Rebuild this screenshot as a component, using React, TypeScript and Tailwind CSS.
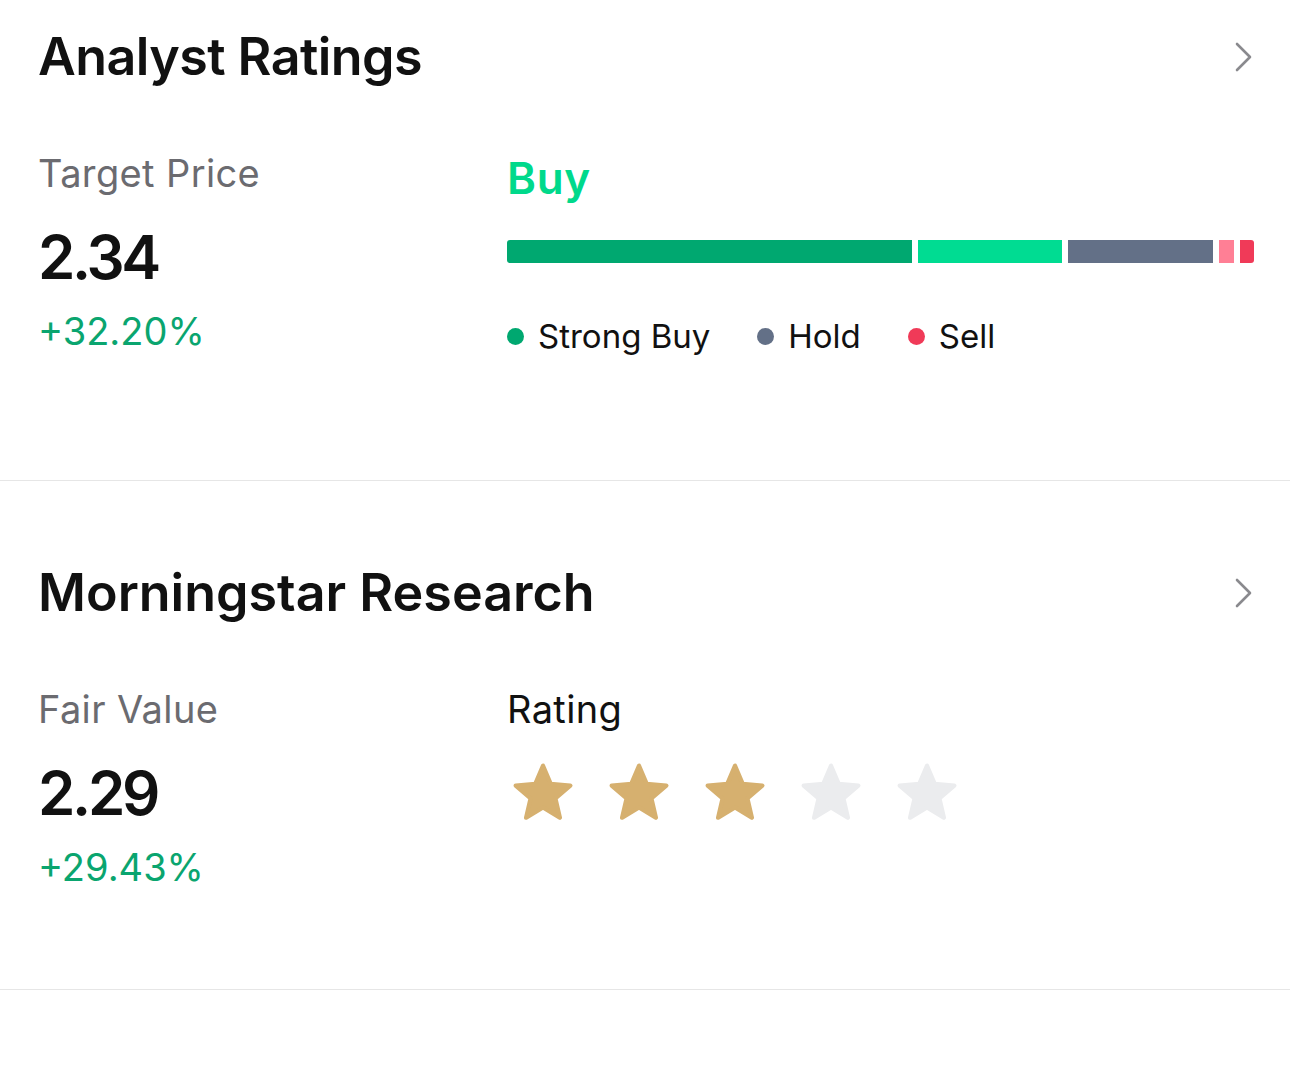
const font = { fontFamily: 'Inter, "Noto Sans", sans-serif' };

const BAR = [
  { w: 405, color: 'bg-[#00a870]' },
  { w: 144, color: 'bg-[#00dc92]' },
  { w: 145, color: 'bg-[#637087]' },
  { w: 15, color: 'bg-[#ff7f95]' },
  { w: 14, color: 'bg-[#f03a58]' },
];

const LEGEND = [
  { label: 'Strong Buy', dot: 'bg-[#00a870]' },
  { label: 'Hold', dot: 'bg-[#637087]' },
  { label: 'Sell', dot: 'bg-[#f03a58]' },
];

function Chevron() {
  return (
    <svg width="17" height="30" viewBox="0 0 17 30" className="shrink-0">
      <polyline
        points="2,2 15,15 2,28"
        fill="none"
        stroke="#8a8a8e"
        strokeWidth="2.6"
        strokeLinecap="round"
        strokeLinejoin="round"
      />
    </svg>
  );
}

function Star({ filled }: { filled: boolean }) {
  const c = filled ? '#d6b06f' : '#ebecee';
  return (
    <svg width="60" height="58" viewBox="1 1 22 21.2">
      <path
        d="M12 17.27L18.18 21l-1.64-7.03L22 9.24l-7.19-.61L12 2 9.19 8.63 2 9.24l5.46 4.73L5.82 21z"
        fill={c}
        stroke={c}
        strokeWidth="1.6"
        strokeLinejoin="round"
      />
    </svg>
  );
}

function SectionHeader({ title, tracking }: { title: string; tracking: string }) {
  return (
    <div className="flex items-center justify-between pr-[2px]">
      <h2 className={`text-[52px] leading-[52px] font-semibold text-[#111] ${tracking}`}>{title}</h2>
      <Chevron />
    </div>
  );
}

function PriceColumn({ label, value, change }: { label: string; value: string; change: string }) {
  return (
    <div className="flex flex-col">
      <div className="text-[38px] leading-[46px] text-[#6b6b70] tracking-[0.01em]">{label}</div>
      <div className="mt-[30px] text-[60px] leading-[62px] font-semibold text-[#111] tracking-[-0.055em]">{value}</div>
      <div className="mt-[20px] text-[38px] leading-[46px] text-[#0aa56f]">{change}</div>
    </div>
  );
}

export default function App() {
  return (
    <div className="w-[1290px] min-h-[1073px] bg-white" style={font}>
      {/* Analyst Ratings */}
      <section className="pl-[38px] pr-[36px] pt-[31px] pb-[124px] border-b border-[#e6e6e6]">
        <SectionHeader title="Analyst Ratings" tracking="tracking-[-0.011em]" />
        <div className="mt-[67px] grid grid-cols-[469px_1fr] items-start">
          <PriceColumn label="Target Price" value="2.34" change="+32.20%" />
          <div className="flex flex-col">
            <div className="mt-[3px] text-[44px] leading-[50px] font-semibold text-[#00d98b] tracking-[0.015em]">Buy</div>
            <div className="mt-[37px] flex gap-[6px] h-[23px] rounded-[3px] overflow-hidden">
              {BAR.map((s, i) => (
                <div key={i} className={`h-full ${s.color}`} style={{ width: s.w }} />
              ))}
            </div>
            <div className="mt-[53px] flex items-center gap-[47px]">
              {LEGEND.map((l) => (
                <div key={l.label} className="flex items-center gap-[14px]">
                  <span className={`w-[17px] h-[17px] rounded-full ${l.dot}`} />
                  <span className="text-[33px] leading-[40px] text-[#111]">{l.label}</span>
                </div>
              ))}
            </div>
          </div>
        </div>
      </section>

      {/* Morningstar Research */}
      <section className="pl-[38px] pr-[36px] pt-[86px] pb-[99px] border-b border-[#e6e6e6]">
        <SectionHeader title="Morningstar Research" tracking="tracking-normal" />
        <div className="mt-[67px] grid grid-cols-[469px_1fr] items-start">
          <PriceColumn label="Fair Value" value="2.29" change="+29.43%" />
          <div className="flex flex-col">
            <div className="text-[38px] leading-[46px] text-[#111] tracking-[0.01em]">Rating</div>
            <div className="mt-[31px] flex gap-[36px] pl-[6px]">
              {[0, 1, 2, 3, 4].map((i) => (
                <Star key={i} filled={i < 3} />
              ))}
            </div>
          </div>
        </div>
      </section>
    </div>
  );
}
